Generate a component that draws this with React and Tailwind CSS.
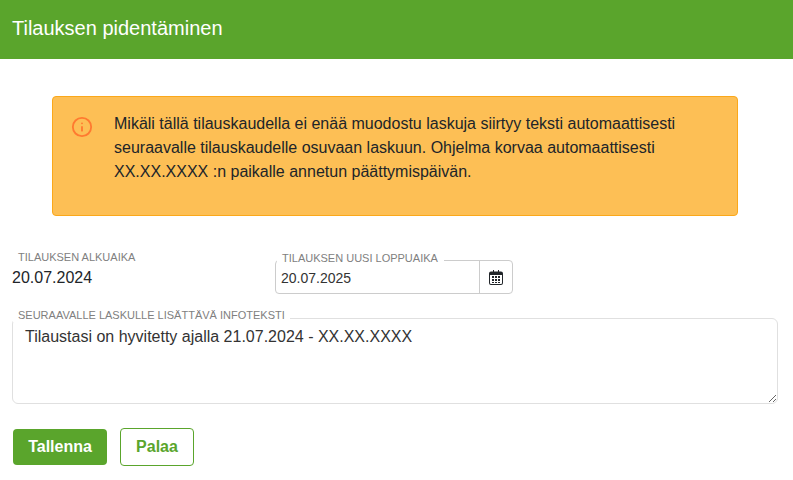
import React from "react";
import { Info } from "lucide-react";

const FONT = "font-['Liberation_Sans',Arial,sans-serif]";

const Calendar = () => (
  <svg width="14" height="15" viewBox="0 0 14 15" className="text-[#212529]">
    <path fill="currentColor" fillRule="evenodd" d="M2 1.5h2V0h1v1.5h4V0h1v1.5h2A2 2 0 0 1 14 3.5v9.5a2 2 0 0 1-2 2H2a2 2 0 0 1-2-2V3.5a2 2 0 0 1 2-2zM1 5v8a1 1 0 0 0 1 1h10a1 1 0 0 0 1-1V5z" />
    <path fill="currentColor" d="M3 6h2v2H3zM6 6h2v2H6zM9 6h2v2H9zM3 9h2v2H3zM6 9h2v2H6zM9 9h2v2H9zM6 12h2v1H6zM3 12h2v1H3zM9 12h2v1H9z" />
  </svg>
);

const App = () => {
  return (
    <div className={`${FONT} h-[480px] w-[793px] overflow-hidden bg-white text-[#212529]`}>
      <header className="flex h-[59px] items-center bg-[#5aa52c] px-3 pb-[3px]">
        <h1 className="text-xl leading-none text-white">Tilauksen pidentäminen</h1>
      </header>

      <div className="ml-[52px] mr-[55px] mt-[37px] flex h-[120px] rounded border border-[#fba81a] bg-[#fdbf55] pt-[14px] pl-[18px]">
        <Info className="mt-[5px] h-[22px] w-[22px] text-[#ff7a30]" strokeWidth={2} />
        <p className="ml-[21px] w-[600px] pt-px text-base leading-6">
          Mikäli tällä tilauskaudella ei enää muodostu laskuja siirtyy teksti automaattisesti seuraavalle tilauskaudelle osuvaan laskuun. Ohjelma korvaa automaattisesti XX.XX.XXXX :n paikalle annetun päättymispäivän.
        </p>
      </div>

      <div className="mt-[35px] flex pl-3">
        <div className="w-[263px]">
          <div className="pl-[6px] text-[11px] leading-[13px] text-[#808080]">TILAUKSEN ALKUAIKA</div>
          <div className="mt-1 text-base leading-5">20.07.2024</div>
        </div>
        <div className="relative mt-[9px] flex h-[34px] w-[238px] rounded border border-[#ccc]">
          <span className="absolute -top-[9px] left-[1px] bg-white pr-[6px] pl-[5px] text-[11px] leading-[13px] text-[#808080]">TILAUKSEN UUSI LOPPUAIKA</span>
          <div className="flex flex-1 items-center pt-[2px] pl-[5px] text-sm text-[#333]">20.07.2025</div>
          <div className="flex w-[33px] items-center justify-center border-l border-[#ccc]">
            <Calendar />
          </div>
        </div>
      </div>

      <div className="relative mx-3 mt-6">
        <span className="absolute -top-[9px] left-[1px] z-10 bg-white pr-[5px] pl-[5px] text-[11px] leading-[13px] text-[#808080]">SEURAAVALLE LASKULLE LISÄTTÄVÄ INFOTEKSTI</span>
        <textarea
          readOnly
          defaultValue="Tilaustasi on hyvitetty ajalla 21.07.2024 - XX.XX.XXXX"
          className="block h-[86px] w-[766px] rounded-md border border-[#e0e0e0] px-3 py-2 text-base leading-5 text-[#333] outline-none"
        />
      </div>

      <div className="mt-[25px] flex gap-[13px] pl-[13px]">
        <button className="h-9 w-[94px] rounded bg-[#5aa52c] text-base font-bold text-white">Tallenna</button>
        <button className="h-[38px] w-[74px] -translate-y-px rounded border border-[#5aa52c] bg-white text-base font-bold text-[#5aa52c]">Palaa</button>
      </div>
    </div>
  );
};

export default App;
